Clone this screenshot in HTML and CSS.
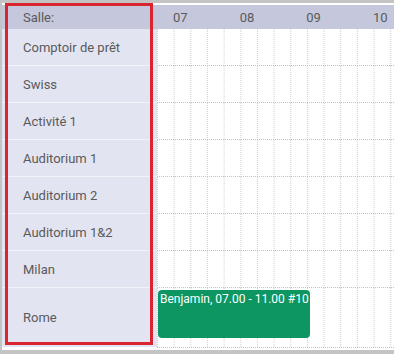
FILE: index.html
```html
<!DOCTYPE html>
<html lang="fr">
<head>
  <meta charset="UTF-8" />
  <title>Planning des salles</title>
  <link rel="stylesheet" href="styles.css">
</head>
<body>
<div class="scheduler">
  <div class="rooms">
    <div class="rooms-head">Salle:</div>
    <div class="room">Comptoir de prêt</div>
    <div class="room">Swiss</div>
    <div class="room">Activité 1</div>
    <div class="room">Auditorium 1</div>
    <div class="room">Auditorium 2</div>
    <div class="room">Auditorium 1&amp;2</div>
    <div class="room">Milan</div>
    <div class="room room-tall">Rome</div>
  </div>
  <div class="timeline">
    <div class="hours">
      <div class="hour">07</div>
      <div class="hour">08</div>
      <div class="hour">09</div>
      <div class="hour">10</div>
    </div>
    <div class="lane"></div>
    <div class="lane"></div>
    <div class="lane"></div>
    <div class="lane"></div>
    <div class="lane"></div>
    <div class="lane"></div>
    <div class="lane"></div>
    <div class="lane lane-tall">
      <div class="event">Benjamin, 07.00 - 11.00 #10</div>
    </div>
  </div>
</div>
<div class="highlight"></div>
</body>
</html>
```

FILE: styles.css
```css
html, body {
  margin: 0;
  padding: 0;
  background: #c4c4c4;
  font-family: Roboto, "Liberation Sans", sans-serif;
  font-size: 13px;
  color: #5a5a5a;
  overflow: hidden;
  height: 354px;
}
.scheduler {
  margin: 3px 0 0 2px;
  height: 347px;
  background: #fff;
  display: flex;
  padding-top: 2px;
  box-sizing: border-box;
  overflow: hidden;
}
.rooms {
  width: 155px;
  flex: none;
  background: #e3e4f1;
  align-self: flex-start;
}
.rooms-head {
  height: 24px;
  background: #c5c8dc;
  padding-left: 21px;
  display: flex;
  align-items: center;
}
.room {
  height: 36px;
  border-bottom: 1px solid #f2f2f9;
  padding-left: 21px;
  display: flex;
  align-items: center;
}
.room.room-tall {
  height: 59px;
  border-bottom: none;
}
.timeline {
  flex: 1;
  min-width: 0;
}
.hours {
  height: 24px;
  background: #c5c8dc;
  display: flex;
}
.hour {
  width: 66.667px;
  flex: none;
  padding-left: 16px;
  box-sizing: border-box;
  display: flex;
  align-items: center;
}
.lane {
  height: 36px;
  border-bottom: 1px dotted #c2c2c2;
  background:
    linear-gradient(rgba(255,255,255,0) 50%, #fff 50%) 0 0 / 100% 2px,
    linear-gradient(90deg, #cfcfcf 1px, transparent 1px) 0 0 / 16.667px 100%;
}
.lane.lane-tall {
  height: 57px;
  padding-top: 2px;
}
.event {
  margin-left: 1px;
  width: 152px;
  height: 48px;
  background: #0d9662;
  border-radius: 4px;
  color: #fff;
  font-size: 12px;
  line-height: 14px;
  padding: 2px 0 0 2px;
  box-sizing: border-box;
  white-space: nowrap;
  overflow: hidden;
}
.highlight {
  position: absolute;
  left: 5px;
  top: 3px;
  width: 148px;
  height: 342px;
  border: 3px solid #d9252f;
  box-sizing: border-box;
  pointer-events: none;
}
```
